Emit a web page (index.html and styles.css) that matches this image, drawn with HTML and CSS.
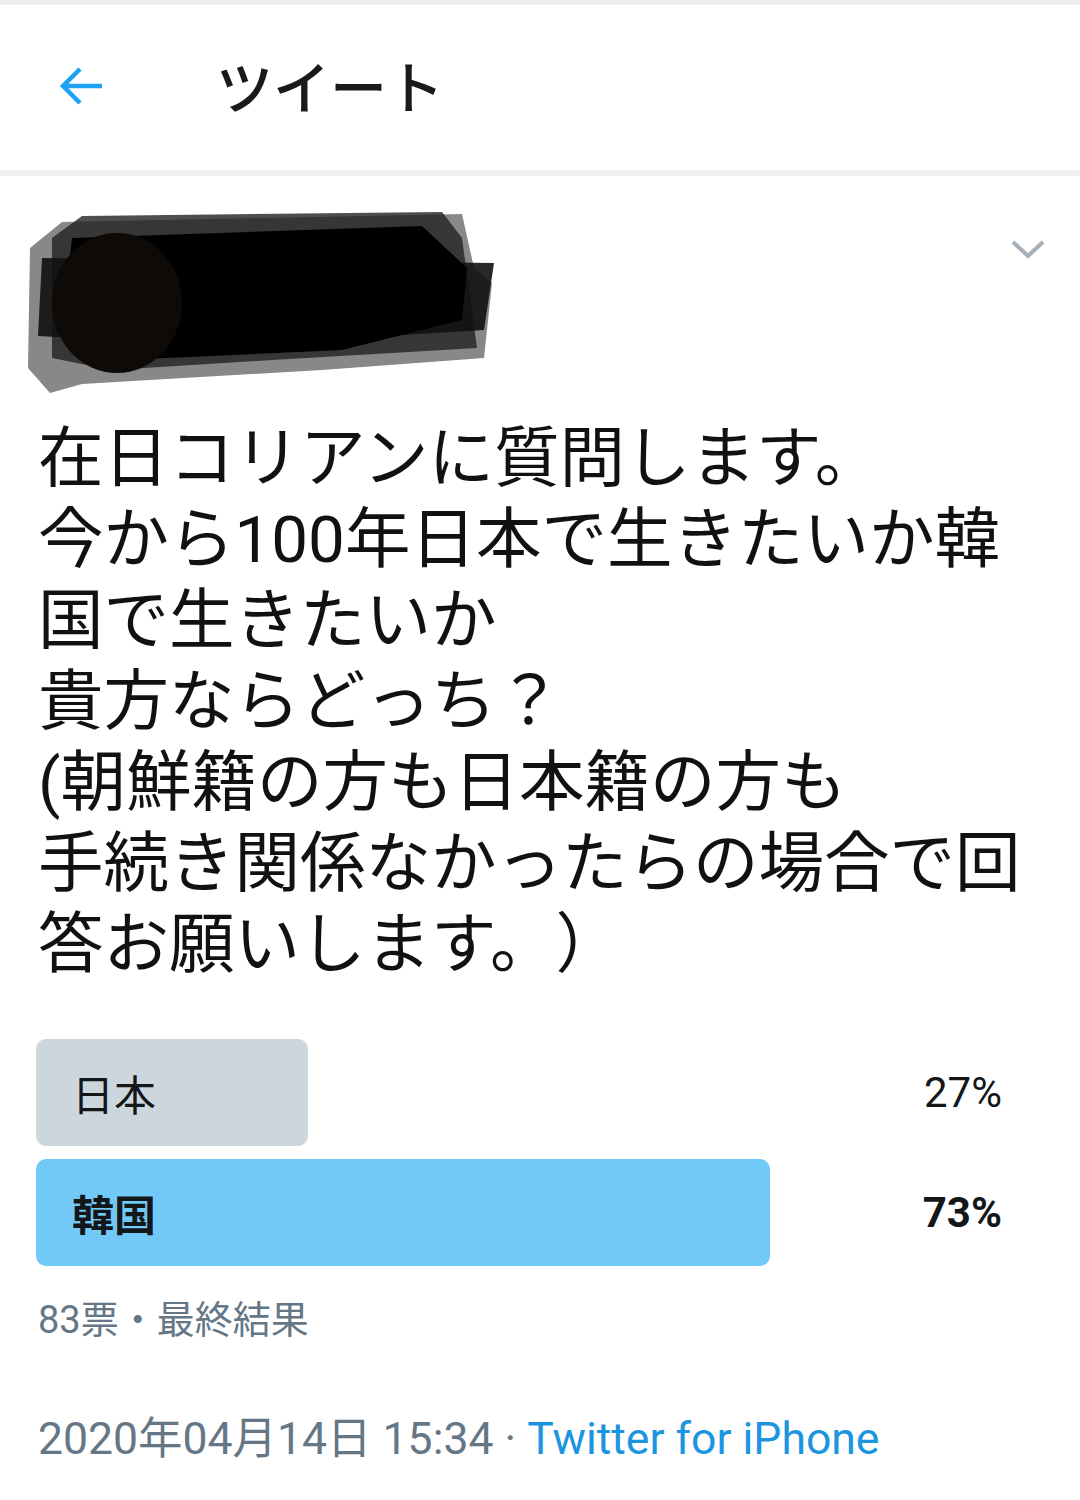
FILE: index.html
```html
<!DOCTYPE html>
<html lang="ja">
<head>
    <meta charset="UTF-8">
    <title>ツイート</title>
    <link rel="stylesheet" href="styles.css">
</head>
<body>
    <div class="top-bar">
        <svg class="back-icon" viewBox="0 0 48 48" width="48" height="48">
            <path d="M44 24H6M22 7L5 24l17 17" fill="none" stroke="#1da1f2" stroke-width="4.5"/>
        </svg>
        <h1 class="top-title">ツイート</h1>
    </div>

    <div class="tweet">
        <div class="tweet-head">
            <svg class="redacted" viewBox="0 0 475 185" width="475" height="185">
                <polygon points="40,14 440,6 452,60 470,75 462,150 300,162 60,176 28,185 6,160 8,40" fill="#555" opacity="0.7"/>
                <polygon points="60,8 420,4 440,30 455,140 250,152 90,162 30,150 30,30" fill="#222" opacity="0.8"/>
                <polygon points="20,50 472,55 462,122 200,138 16,128" fill="#111" opacity="0.9"/>
                <polygon points="50,30 400,18 445,60 440,112 320,142 100,152 40,120" fill="#000"/>
                <ellipse cx="95" cy="95" rx="65" ry="70" fill="#0e0a07"/>
            </svg>
            <svg class="chevron" viewBox="0 0 36 22" width="36" height="22">
                <path d="M3 4l15 14L33 4" fill="none" stroke="#a5b0b8" stroke-width="4"/>
            </svg>
        </div>

        <p class="tweet-text">在日コリアンに質問します。<br>今から100年日本で生きたいか韓国で生きたいか<br>貴方ならどっち？<br>(朝鮮籍の方も日本籍の方も<br>手続き関係なかったらの場合で回答お願いします。）</p>

        <div class="poll">
            <div class="poll-row">
                <div class="poll-bar" style="width: 27%">日本</div>
                <div class="poll-pct">27%</div>
            </div>
            <div class="poll-row winner">
                <div class="poll-bar" style="width: 73%">韓国</div>
                <div class="poll-pct">73%</div>
            </div>
            <div class="poll-meta">83票・最終結果</div>
        </div>

        <div class="tweet-time">2020年04月14日 15:34 · <span class="source">Twitter for iPhone</span></div>
    </div>
</body>
</html>
```

FILE: styles.css
```css
* {
    margin: 0;
    padding: 0;
    box-sizing: border-box;
}

body {
    background: #fff;
    color: #14171a;
    font-family: Roboto, "Noto Sans CJK JP", sans-serif;
    width: 1080px;
}

.top-bar {
    height: 176px;
    border-top: 5px solid #ededed;
    border-bottom: 6px solid #efefef;
    display: flex;
    align-items: center;
    padding-left: 58px;
}

.back-icon {
    margin-right: 110px;
    margin-top: -4px;
}

.top-title {
    font-size: 57px;
    font-weight: 500;
    color: #1a1a1a;
    margin-top: -8px;
}

.tweet {
    padding: 0 38px;
}

.tweet-head {
    display: flex;
    justify-content: space-between;
    align-items: flex-start;
    margin-top: 32px;
    margin-left: -16px;
    height: 210px;
}

.chevron {
    margin-top: 30px;
    margin-right: -4px;
}

.tweet-text {
    font-size: 65.5px;
    line-height: 81px;
    width: 1010px;
    color: #111;
    text-spacing-trim: space-all;
}

.poll {
    margin-top: 54px;
    display: flex;
    flex-direction: column;
    gap: 13px;
}

.poll-row {
    display: flex;
    align-items: center;
    justify-content: space-between;
    margin-left: -2px;
}

.poll-bar {
    height: 107px;
    background: #ccd6dd;
    border-radius: 10px;
    font-size: 42px;
    display: flex;
    align-items: center;
    padding-left: 36px;
    color: #14171a;
}

.poll-pct {
    font-size: 42px;
    padding-right: 40px;
    color: #14171a;
}

.winner .poll-bar {
    background: #71c9f8;
    font-weight: bold;
}

.winner .poll-pct {
    font-weight: bold;
}

.poll-meta {
    font-size: 38px;
    color: #657786;
    margin-top: 10px;
}

.tweet-time {
    margin-top: 58px;
    font-size: 44.5px;
    color: #657786;
}

.source {
    color: #1b95e0;
}
```
